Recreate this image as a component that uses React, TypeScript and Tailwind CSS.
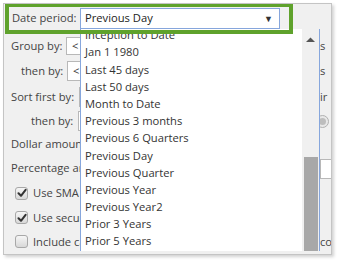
import React from "react";

const font = { fontFamily: '"Open Sans", "Noto Sans", sans-serif' };

const items = [
  "Inception to Date",
  "Jan 1 1980",
  "Last 45 days",
  "Last 50 days",
  "Month to Date",
  "Previous 3 months",
  "Previous 6 Quarters",
  "Previous Day",
  "Previous Quarter",
  "Previous Year",
  "Previous Year2",
  "Prior 3 Years",
  "Prior 5 Years",
];

function Check({ checked }: { checked: boolean }) {
  return (
    <div className="w-[13px] h-[13px] rounded-[3px] border border-[#a8a8a8] bg-gradient-to-b from-[#f6f6f6] to-[#d8d8d8] flex items-center justify-center shrink-0">
      {checked && (
        <svg width="10" height="10" viewBox="0 0 10 10">
          <path d="M1.5 5.2 L4 7.8 L8.6 1.8" fill="none" stroke="#333" strokeWidth="2" strokeLinecap="round" strokeLinejoin="round" />
        </svg>
      )}
    </div>
  );
}

function SmallBox({ h = "h-[18px]", text = "<" }: { h?: string; text?: string }) {
  return (
    <div className={`${h} w-[40px] bg-white border border-[#b8b8b8] flex items-center pl-[5px] text-[#333] shrink-0`}>
      {text}
    </div>
  );
}

function Right({ children }: { children?: React.ReactNode }) {
  return (
    <div className="ml-auto w-[11px] h-full flex items-center overflow-hidden text-[#444] shrink-0 whitespace-nowrap">
      {children}
    </div>
  );
}

export default function App() {
  return (
    <div className="w-[341px] h-[264px] bg-white overflow-hidden" style={font}>
      <div className="ml-[3px] mt-[3px] w-[329px] h-[252px] border border-[#c4c4c4] bg-[#f0f0f0] relative overflow-hidden shadow-[2px_2px_3px_rgba(0,0,0,0.18)] text-[11.2px]">
        {/* Date period row (highlighted) */}
        <div className="relative z-10 mt-[-1px] ml-[1px] w-[288px] h-[31px] border-4 border-[#5fa22c] flex items-center">
          <div className="pl-[3px] w-[71px] text-[#444] shrink-0 whitespace-nowrap">Date period:</div>
          <div className="w-[200px] h-[21px] bg-white border-[1.5px] border-[#86a6dc] flex items-center pl-[4px] pr-[6px] text-[#222]">
            <span className="whitespace-nowrap">Previous Day</span>
            <span className="ml-auto text-[9px] text-[#333]">▼</span>
          </div>
        </div>

        {/* Form rows */}
        <div className="flex flex-col text-[#444]">
          <div className="h-[24px] flex items-center">
            <div className="w-[76px] flex items-center overflow-hidden shrink-0">
              <span className="pl-[7px] w-[62px] whitespace-nowrap shrink-0">Group by:</span>
              <SmallBox />
            </div>
            <Right>s</Right>
          </div>
          <div className="h-[26px] flex items-center">
            <div className="w-[76px] flex items-center overflow-hidden shrink-0">
              <span className="pl-[17px] w-[63px] whitespace-nowrap shrink-0">then by:</span>
              <SmallBox h="h-[20px]" />
            </div>
            <Right>s</Right>
          </div>
          <div className="h-[26px] flex items-center">
            <div className="w-[76px] flex items-center overflow-hidden shrink-0">
              <span className="pl-[7px] w-[75px] whitespace-nowrap shrink-0">Sort first by:</span>
              <SmallBox h="h-[20px]" />
            </div>
            <Right>ir</Right>
          </div>
          <div className="h-[22px] flex items-center">
            <div className="w-[76px] flex items-center overflow-hidden shrink-0">
              <span className="pl-[27px] w-[74px] whitespace-nowrap shrink-0">then by:</span>
              <SmallBox h="h-[20px]" />
            </div>
            <div className="ml-auto w-[11px] h-full flex items-center overflow-hidden shrink-0">
              <div className="ml-[-4px] w-[13px] h-[13px] rounded-full border border-[#b0b0b0] bg-[#e8e8e8] flex items-center justify-center shrink-0">
                <div className="w-[7px] h-[7px] rounded-full bg-[#bdbdbd]" />
              </div>
            </div>
          </div>
          <div className="h-[24px] flex items-center">
            <div className="w-[76px] overflow-hidden shrink-0">
              <span className="pl-[7px] whitespace-nowrap">Dollar amount</span>
            </div>
            <Right />
          </div>
          <div className="h-[25px] flex items-center">
            <div className="w-[76px] overflow-hidden shrink-0">
              <span className="pl-[7px] whitespace-nowrap">Percentage amount</span>
            </div>
            <div className="ml-auto w-[11px] h-full flex items-center overflow-hidden shrink-0">
              <div className="w-[20px] h-[20px] bg-white border border-[#b8b8b8] shrink-0" />
            </div>
          </div>
          <div className="h-[25px] flex items-center">
            <div className="w-[76px] flex items-center overflow-hidden pl-[11px] gap-[5px] shrink-0">
              <Check checked />
              <span className="whitespace-nowrap">Use SMA</span>
            </div>
            <Right />
          </div>
          <div className="h-[24px] flex items-center">
            <div className="w-[76px] flex items-center overflow-hidden pl-[11px] gap-[5px] shrink-0">
              <Check checked />
              <span className="whitespace-nowrap">Use security</span>
            </div>
            <Right />
          </div>
          <div className="h-[24px] flex items-center">
            <div className="w-[76px] flex items-center overflow-hidden pl-[11px] gap-[5px] shrink-0">
              <Check checked={false} />
              <span className="whitespace-nowrap">Include cash</span>
            </div>
            <Right>co</Right>
          </div>
        </div>

        {/* Open dropdown list */}
        <div className="absolute z-0 left-[76px] top-[25px] w-[240px] h-[222px] bg-white border-l border-r border-[#86a6dc] flex overflow-hidden">
          <div className="flex-1 overflow-hidden">
            <div className="mt-[-2px] flex flex-col text-[#333]">
              {items.map((t) => (
                <div key={t} className="h-[17.2px] flex items-center pl-[4px] whitespace-nowrap">
                  {t}
                </div>
              ))}
            </div>
          </div>
          <div className="w-[17px] h-full bg-[#f0f0f0] flex flex-col items-center">
            <svg width="9" height="6" viewBox="0 0 9 6" className="mt-[8px]">
              <path d="M0 5 L4.5 0.5 L9 5 Z" fill="#555" />
            </svg>
            <div className="mt-auto w-[14px] h-[94px] bg-[#a8a8a8]" />
          </div>
        </div>
      </div>
    </div>
  );
}
